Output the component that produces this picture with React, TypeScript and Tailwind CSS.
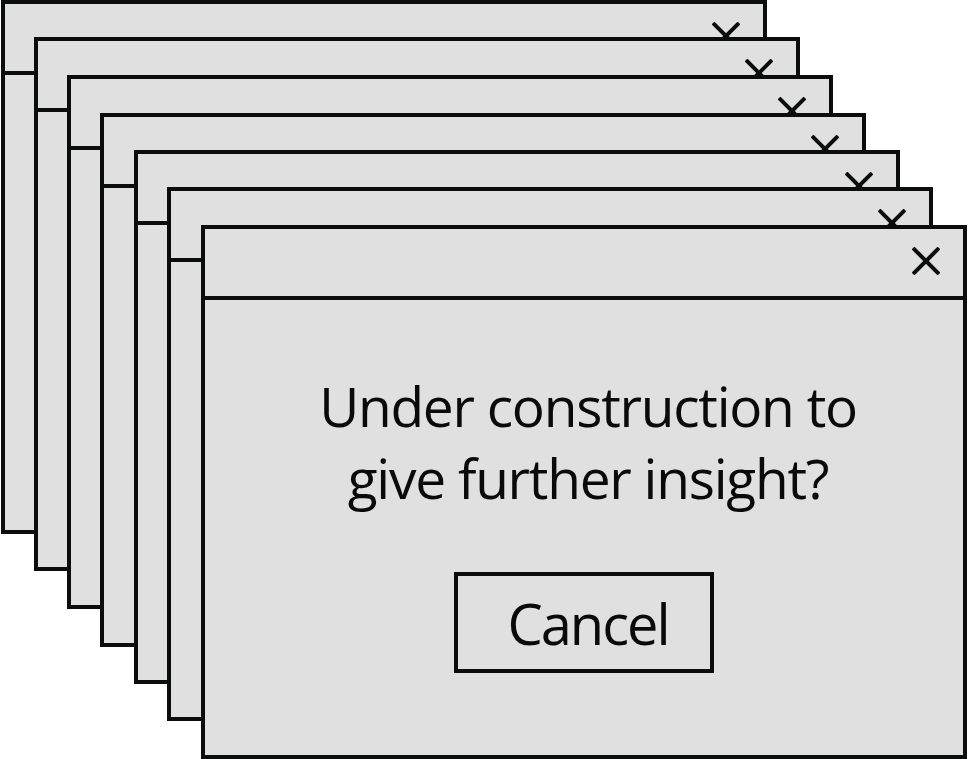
import React from 'react';

const stack = [
  'left-[1px] top-[0px]',
  'left-[34px] top-[37px]',
  'left-[67px] top-[75px]',
  'left-[100px] top-[113px]',
  'left-[134px] top-[150px]',
  'left-[167px] top-[187px]',
];

function CloseIcon() {
  return (
    <svg width="28" height="28" viewBox="0 0 28 28" fill="none" stroke="#0b0d0d" strokeWidth="4">
      <line x1="1" y1="1" x2="27" y2="27" />
      <line x1="27" y1="1" x2="1" y2="27" />
    </svg>
  );
}

function Window({ pos, children }: { pos: string; children?: React.ReactNode }) {
  return (
    <div className={`absolute ${pos} w-[766px] h-[534px] flex flex-col border-4 border-[#0b0d0d] bg-[#dfe0df]`}>
      <div className="h-[71px] shrink-0 flex items-center justify-end pr-[23px] pb-[3px] border-b-4 border-[#0b0d0d]">
        <CloseIcon />
      </div>
      {children}
    </div>
  );
}

export default function App() {
  return (
    <div className="relative w-[968px] h-[759px] overflow-hidden bg-white font-['Open_Sans',sans-serif] text-[#0a0a0a]">
      {stack.map((pos) => (
        <Window key={pos} pos={pos} />
      ))}
      <Window pos="left-[201px] top-[225px]">
        <div className="flex flex-col items-center pt-[70px]">
          <p className="text-[55px] leading-[72px] tracking-[-1.25px] text-center pl-[8px]">
            Under construction to
            <br />
            give further insight?
          </p>
          <button className="mt-[58px] w-[260px] h-[101px] flex items-center justify-center border-4 border-[#0b0d0d] text-[56px] leading-none tracking-[-2px] pl-[8px]">
            Cancel
          </button>
        </div>
      </Window>
    </div>
  );
}
